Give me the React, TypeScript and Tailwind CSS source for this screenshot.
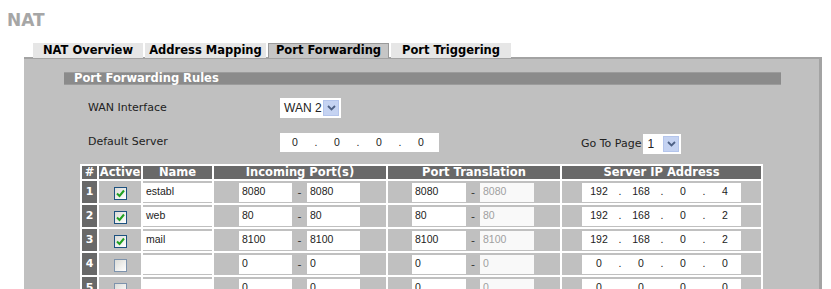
import type { ReactNode } from 'react';

// ── data ─────────────────────────────────────────────────────────────────────

type Rule = {
  n: number;
  active: boolean;
  name: string;
  inFrom: string;
  inTo: string;
  trFrom: string;
  trTo: string;
  ip: string[];
};

const rules: Rule[] = [
  { n: 1, active: true, name: 'establ', inFrom: '8080', inTo: '8080', trFrom: '8080', trTo: '8080', ip: ['192', '168', '0', '4'] },
  { n: 2, active: true, name: 'web', inFrom: '80', inTo: '80', trFrom: '80', trTo: '80', ip: ['192', '168', '0', '2'] },
  { n: 3, active: true, name: 'mail', inFrom: '8100', inTo: '8100', trFrom: '8100', trTo: '8100', ip: ['192', '168', '0', '2'] },
  { n: 4, active: false, name: '', inFrom: '0', inTo: '0', trFrom: '0', trTo: '0', ip: ['0', '0', '0', '0'] },
  { n: 5, active: false, name: '', inFrom: '0', inTo: '0', trFrom: '0', trTo: '0', ip: ['0', '0', '0', '0'] },
];

const tabs = [
  { label: 'NAT Overview', w: 'w-[110px]' },
  { label: 'Address Mapping', w: 'w-[121px]' },
  { label: 'Port Forwarding', w: 'w-[121px]', active: true },
  { label: 'Port Triggering', w: 'w-[120px]' },
];

// ── small widgets ────────────────────────────────────────────────────────────

function Field({ value, w, muted }: { value: string; w: string; muted?: boolean }) {
  return (
    <div
      className={`${w} h-[19px] flex items-center pl-[3px] text-[10.5px] font-['Liberation_Sans',Arial,sans-serif] ${
        muted ? 'bg-[#f9f9f9] text-[#a0a0a0]' : 'bg-white text-[#222]'
      }`}
    >
      {value}
    </div>
  );
}

function IpBox({ parts, lead }: { parts: string[]; lead: string }) {
  const out: ReactNode[] = [];
  parts.forEach((p, i) => {
    out.push(
      <span key={`p${i}`} className="w-[30px] text-center">
        {p}
      </span>
    );
    if (i < parts.length - 1)
      out.push(
        <span key={`d${i}`} className="w-[12px] text-center">
          .
        </span>
      );
  });
  return (
    <div
      className={`w-[159px] h-[19px] bg-white flex items-center ${lead} text-[10.5px] text-[#222] font-['Liberation_Sans',Arial,sans-serif]`}
    >
      {out}
    </div>
  );
}

function Dash({ w }: { w: string }) {
  return <span className={`${w} text-center text-[11px] text-[#333] leading-none pt-[4px]`}>-</span>;
}

function Check({ on }: { on: boolean }) {
  return (
    <span
      className={`inline-flex w-[13px] h-[13px] items-center justify-center border bg-gradient-to-br from-[#dcdcd7] to-white ${
        on ? 'border-[#1c5180]' : 'border-[#7d93ad]'
      }`}
    >
      {on && (
        <svg width="9" height="9" viewBox="0 0 9 9">
          <path d="M1 4.5 L3.5 7 L8 1.5" fill="none" stroke="#21a121" strokeWidth="2" />
        </svg>
      )}
    </span>
  );
}

function Select({ value, w }: { value: string; w: string }) {
  return (
    <div className={`${w} h-[20px] bg-white flex items-center justify-between pl-[4px] pr-[2px]`}>
      <span className="text-[12px] text-[#222] font-['Liberation_Sans',Arial,sans-serif]">{value}</span>
      <span className="w-[16px] h-[16px] bg-[#c5d3f2] border border-[#b4c5ec] flex items-center justify-center">
        <svg width="9" height="6" viewBox="0 0 9 6">
          <path d="M1 1 L4.5 4.5 L8 1" fill="none" stroke="#4d6185" strokeWidth="1.8" />
        </svg>
      </span>
    </div>
  );
}

// ── main component ───────────────────────────────────────────────────────────

export default function App() {
  return (
    <div className="w-[831px] h-[289px] overflow-hidden bg-white font-['DejaVu_Sans',Verdana,sans-serif] text-[11px] text-[#222]">
      {/* page title */}
      <div className="pl-[7px] pt-[10px] h-[43px]">
        <h1 className="text-[17px] font-bold text-[#a6a6a6] leading-[20px]">NAT</h1>
      </div>

      {/* tabs */}
      <div className="flex gap-[2px] pl-[33px] h-[14px]">
        {tabs.map((t) => (
          <div
            key={t.label}
            className={`${t.w} h-[15px] flex items-center justify-center font-bold text-[11.5px] text-black ${
              t.active ? 'bg-[#c6c6c6] border border-b-0 border-[#9a9a9a]' : 'bg-[#e6e6e6]'
            }`}
          >
            {t.label}
          </div>
        ))}
      </div>

      {/* panel */}
      <div className="ml-[24px] w-[798px] h-[240px] bg-[#c0c0c0] border-t-2 border-r-[3px] border-[#a3a3a3] pt-[13px]">
        {/* section header */}
        <div className="ml-[40px] w-[717px] h-[13px] bg-[#8b8b8b] border-y border-[#9c9c9c] flex items-center pl-[10px] text-white font-bold text-[11.5px]">
          Port Forwarding Rules
        </div>

        {/* WAN interface */}
        <div className="flex items-center mt-[13px] pl-[64px] h-[20px]">
          <span className="w-[192px]">WAN Interface</span>
          <Select value="WAN 2" w="w-[61px]" />
        </div>

        {/* default server + go to page */}
        <div className="flex items-center mt-[15px] pl-[64px] h-[19px]">
          <span className="w-[192px]">Default Server</span>
          <IpBox parts={['0', '0', '0', '0']} lead="pl-0" />
          <span className="ml-[142px] mt-[4px]">Go To Page</span>
          <div className="ml-[2px] mt-[2px]">
            <Select value="1" w="w-[38px]" />
          </div>
        </div>

        {/* rules table */}
        <table className="ml-[56px] mt-[12px] border-separate border-spacing-[2px] bg-white">
          <thead>
            <tr className="bg-[#696969] text-white font-bold text-[11.5px] h-[13px] leading-[13px]">
              <th className="w-[15px] p-0">#</th>
              <th className="w-[42px] p-0">Active</th>
              <th className="w-[69px] p-0">Name</th>
              <th className="w-[172px] p-0">Incoming Port(s)</th>
              <th className="w-[172px] p-0">Port Translation</th>
              <th className="w-[199px] p-0">Server IP Address</th>
            </tr>
          </thead>
          <tbody>
            {rules.map((r) => (
              <tr key={r.n} className="h-[22px] bg-[#c0c0c0]">
                <td className="p-0 bg-[#696969] text-white font-bold text-center">{r.n}</td>
                <td className="p-0">
                  <div className="flex justify-center pt-[2px]">
                    <Check on={r.active} />
                  </div>
                </td>
                <td className="p-0">
                  <Field value={r.name} w="w-[69px]" />
                </td>
                <td className="p-0">
                  <div className="flex pl-[25px]">
                    <Field value={r.inFrom} w="w-[53px]" />
                    <Dash w="w-[15px]" />
                    <Field value={r.inTo} w="w-[53px]" />
                  </div>
                </td>
                <td className="p-0">
                  <div className="flex pl-[24px]">
                    <Field value={r.trFrom} w="w-[54px]" />
                    <Dash w="w-[14px]" />
                    <Field value={r.trTo} w="w-[54px]" muted />
                  </div>
                </td>
                <td className="p-0">
                  <div className="flex pl-[20px]">
                    <IpBox parts={r.ip} lead="pl-[2px]" />
                  </div>
                </td>
              </tr>
            ))}
          </tbody>
        </table>
      </div>
    </div>
  );
}
